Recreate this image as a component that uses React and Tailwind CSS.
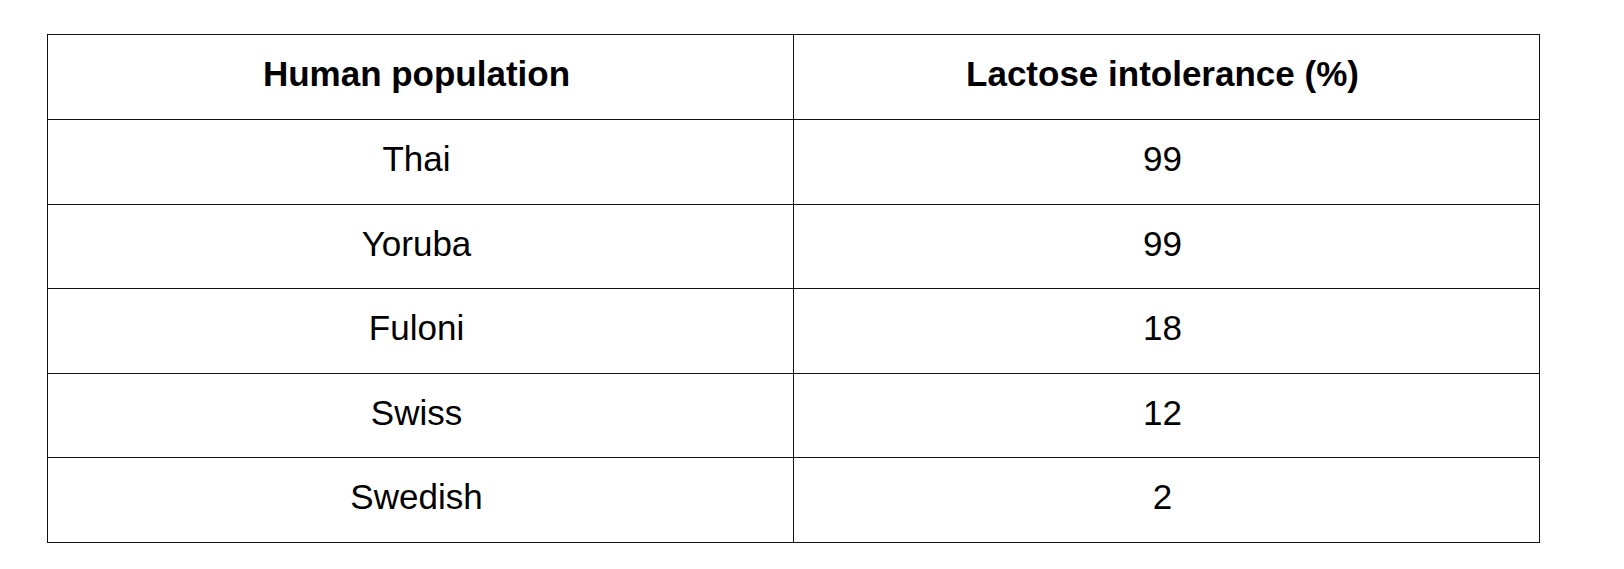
const rows = [
  ["Thai", "99"],
  ["Yoruba", "99"],
  ["Fuloni", "18"],
  ["Swiss", "12"],
  ["Swedish", "2"],
];

const cell = "border-[1.5px] border-[#111] text-center align-middle pr-[8px] pb-[5px]";

export default function App() {
  return (
    <div className="w-[1624px] h-[569px] bg-white pl-[47px] pt-[34px] font-['Liberation_Sans',Arial,sans-serif] text-black">
      <table className="w-[1493px] table-fixed border-collapse text-[35px]">
        <thead>
          <tr className="h-[85px]">
            <th className={`${cell} font-bold`}>Human population</th>
            <th className={`${cell} font-bold`}>Lactose intolerance (%)</th>
          </tr>
        </thead>
        <tbody>
          {rows.map(([pop, pct]) => (
            <tr key={pop} className="h-[84.5px]">
              <td className={cell}>{pop}</td>
              <td className={cell}>{pct}</td>
            </tr>
          ))}
        </tbody>
      </table>
    </div>
  );
}
